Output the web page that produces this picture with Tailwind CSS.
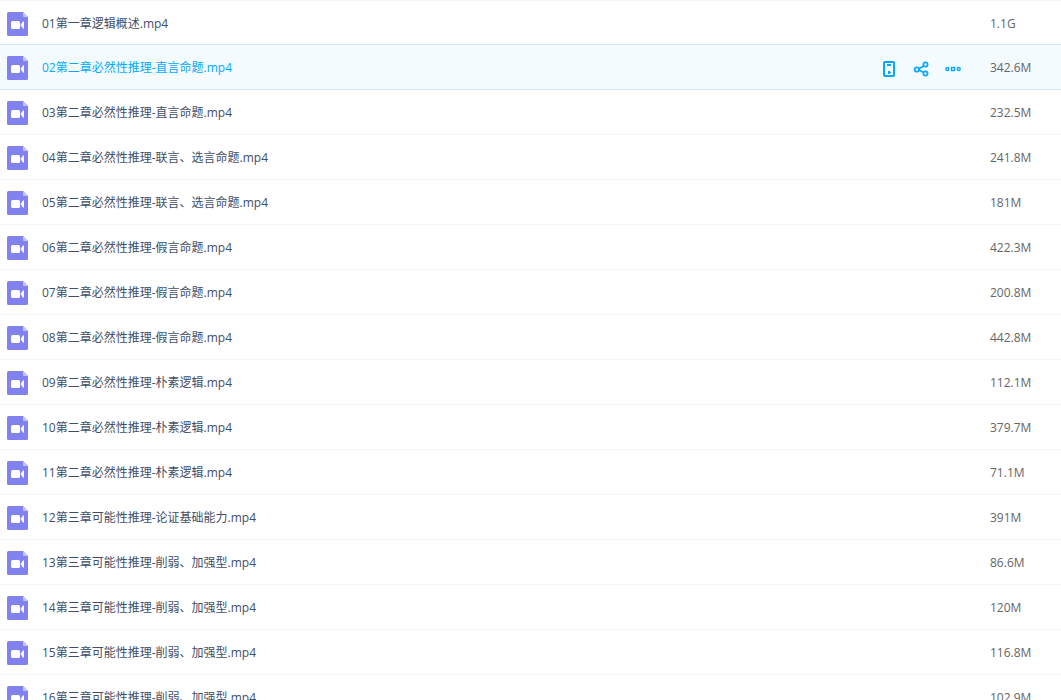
<!DOCTYPE html>
<html lang="zh-CN">
<head>
<meta charset="utf-8">
<meta name="viewport" content="width=device-width, initial-scale=1">
<title>文件列表</title>
<script src="https://cdn.jsdelivr.net/npm/@tailwindcss/browser@4"></script>
</head>
<body class="h-screen overflow-hidden bg-white font-['Open_Sans','Noto_Sans_CJK_SC',sans-serif] text-xs text-[#424e67]">
<svg class="hidden" aria-hidden="true">
  <symbol id="video" viewBox="0 0 21 24">
    <path fill="#8182f0" d="M1.500 0H16L21 5V22.500Q21 24 19.500 24H1.500Q0 24 0 22.500V1.500Q0 0 1.500 0Z"/>
    <path fill="#c3c3f8" d="M16 0L21 5H17Q16 5 16 4Z"/>
    <rect x="4" y="9" width="9" height="8" rx="1.500" fill="#fff"/>
    <path fill="#fff" d="M13.500 13L16 9.500Q17 9 17 10V16Q17 17 16 16.500Z"/>
  </symbol>
</svg>
<table class="w-full table-fixed border-collapse">
  <tbody id="files"></tbody>
</table>

<template id="row">
  <tr class="h-[45px] border-y border-[#f2f6fd]">
    <td class="p-0 pl-[7px]">
      <div class="flex items-center">
        <svg class="mt-[2px] mr-[14px] h-6 w-[21px] shrink-0" aria-hidden="true"><use href="#video"/></svg>
        <a href="#" class="truncate pt-[2px] leading-5"></a>
      </div>
    </td>
    <td class="w-28 p-0"></td>
    <td class="w-[71px] p-0 pt-[2px] leading-5 text-[#666]"></td>
  </tr>
</template>

<template id="actions">
  <div class="mt-1 flex items-center gap-4 pl-[3px] text-[#06a7ff]">
    <button type="button" aria-label="发送到手机" class="size-4">
      <svg class="size-4" viewBox="0 0 16 16" fill="none" stroke="currentColor" stroke-width="2"><rect x="3" y="1" width="10" height="14" rx="1"/><path d="M6 4H10"/><path d="M7 10H9V11H10V12H9V13H7Z" fill="currentColor" stroke="none"/></svg>
    </button>
    <button type="button" aria-label="分享" class="size-4">
      <svg class="size-4" viewBox="0 0 16 16" fill="none" stroke="currentColor" stroke-width="1.700"><circle cx="3.800" cy="8.500" r="2.200"/><circle cx="12.500" cy="3.500" r="2.100"/><circle cx="12.500" cy="12.500" r="2.100"/><path d="M6 7.800L10.700 5M6 9L10.700 11.500"/></svg>
    </button>
    <button type="button" aria-label="更多" class="size-4">
      <svg class="size-4" viewBox="0 0 16 16" fill="none" stroke="currentColor" stroke-width="1.400"><circle cx="2.300" cy="8" r="1.500"/><rect x="6.500" y="6.500" width="3" height="3"/><circle cx="13.700" cy="8" r="1.500"/></svg>
    </button>
  </div>
</template>

<script>
const files = [
  ['01第一章逻辑概述.mp4', '1.1G'],
  ['02第二章必然性推理-直言命题.mp4', '342.6M'],
  ['03第二章必然性推理-直言命题.mp4', '232.5M'],
  ['04第二章必然性推理-联言、选言命题.mp4', '241.8M'],
  ['05第二章必然性推理-联言、选言命题.mp4', '181M'],
  ['06第二章必然性推理-假言命题.mp4', '422.3M'],
  ['07第二章必然性推理-假言命题.mp4', '200.8M'],
  ['08第二章必然性推理-假言命题.mp4', '442.8M'],
  ['09第二章必然性推理-朴素逻辑.mp4', '112.1M'],
  ['10第二章必然性推理-朴素逻辑.mp4', '379.7M'],
  ['11第二章必然性推理-朴素逻辑.mp4', '71.1M'],
  ['12第三章可能性推理-论证基础能力.mp4', '391M'],
  ['13第三章可能性推理-削弱、加强型.mp4', '86.6M'],
  ['14第三章可能性推理-削弱、加强型.mp4', '120M'],
  ['15第三章可能性推理-削弱、加强型.mp4', '116.8M'],
  ['16第三章可能性推理-削弱、加强型.mp4', '102.9M']
];
const active = 1;
const body = document.getElementById('files');
files.forEach(([name, size], i) => {
  const row = document.getElementById('row').content.cloneNode(true);
  const tr = row.querySelector('tr');
  const cells = row.querySelectorAll('td');
  row.querySelector('a').textContent = name;
  cells[2].textContent = size;
  if (i === active) {
    tr.className = 'h-[45px] border-y border-[#d4eafc] bg-[#f3fbff]';
    row.querySelector('a').className = 'truncate pt-[2px] leading-5 text-[#06a7ff]';
    cells[1].append(document.getElementById('actions').content.cloneNode(true));
  } else if (i === active - 1) {
    tr.className = 'h-11 border-t border-[#f2f6fd]';
  } else if (i === active + 1) {
    tr.className = 'h-[45px] border-b border-[#f2f6fd]';
  }
  body.append(row);
});
</script>
</body>
</html>
